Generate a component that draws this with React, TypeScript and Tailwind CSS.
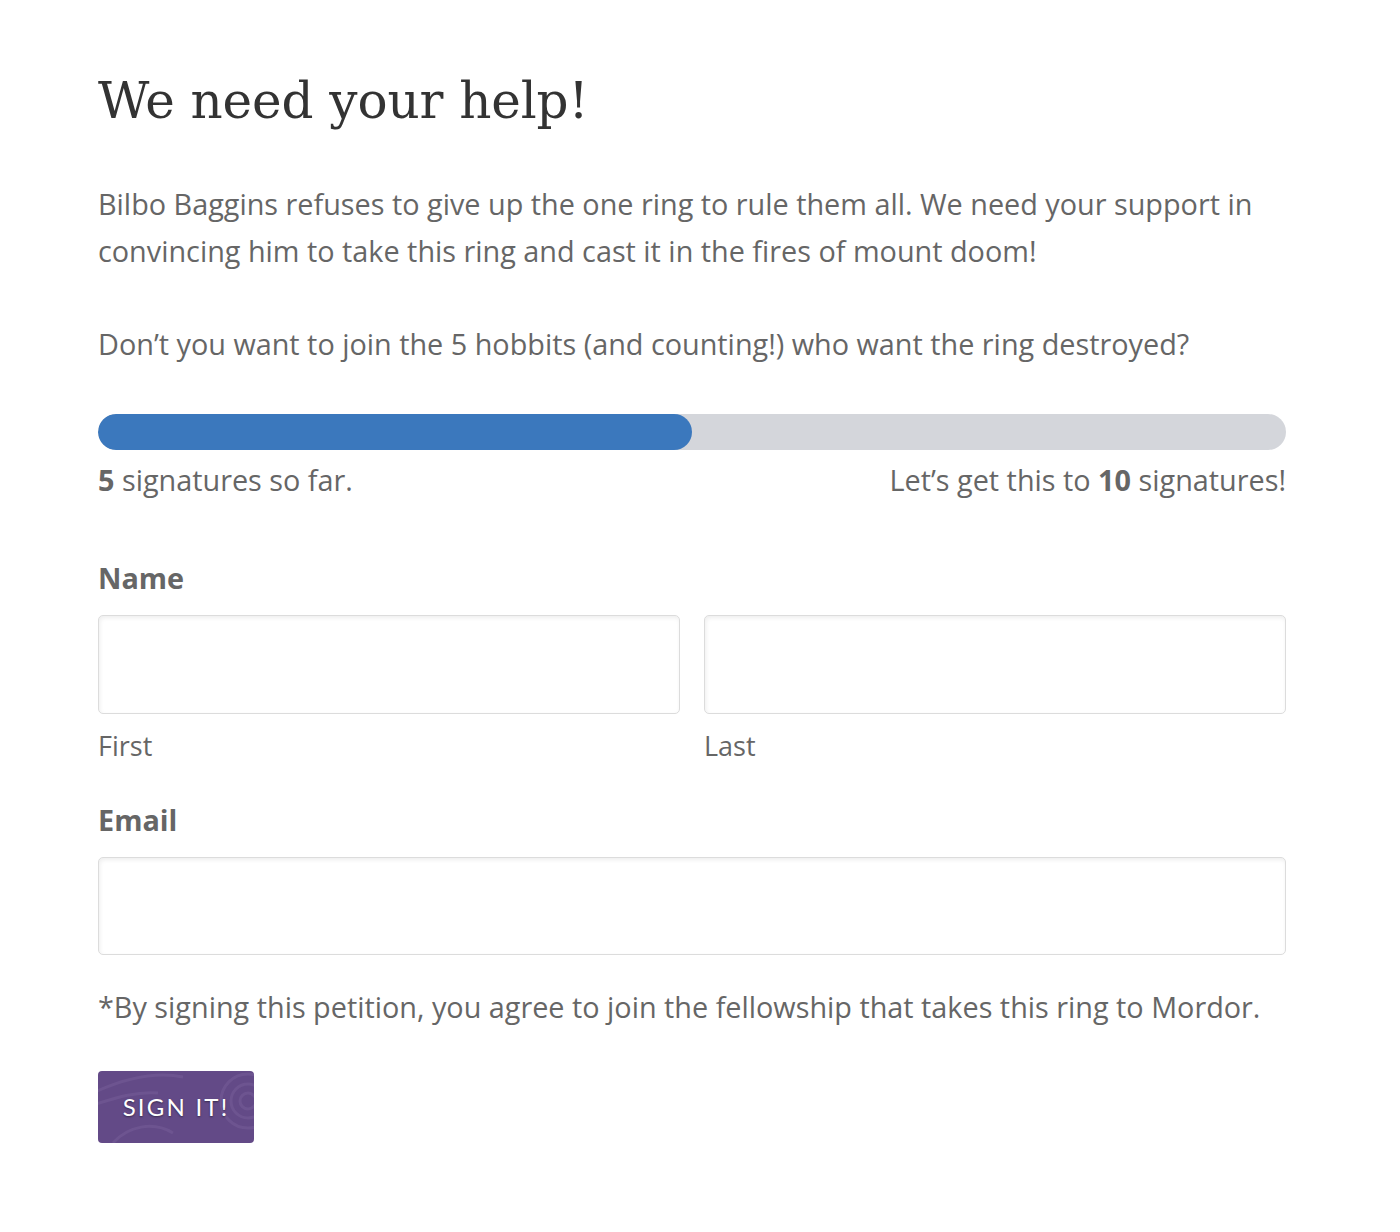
import React from 'react';

const body = "font-['Open_Sans',sans-serif]";
const field =
  'block w-full rounded-[5px] border border-[#dcdcdc] bg-white shadow-[inset_1px_2px_4px_rgba(0,0,0,0.07)] outline-none';

export default function App() {
  return (
    <div className={`min-h-[1232px] bg-white ${body} text-[#666]`}>
      <div className="mx-[98px] w-[1188px] pt-[66px]">
        {/* Heading */}
        <h1 className="font-['DejaVu_Serif',serif] text-[50px] leading-[70px] text-[#333] tracking-[-0.1px]">
          We need your help!
        </h1>

        {/* Intro copy */}
        <p className="mt-[44px] text-[28.8px] leading-[47px]">
          Bilbo Baggins refuses to give up the one ring to rule them all. We need your support in
          convincing him to take this ring and cast it in the fires of mount doom!
        </p>
        <p className="mt-[46px] text-[28.8px] leading-[47px]">
          Don’t you want to join the 5 hobbits (and counting!) who want the ring destroyed?
        </p>

        {/* Progress */}
        <div className="mt-[47px] h-[36px] w-full overflow-hidden rounded-full bg-[#d4d6db]">
          <div className="h-full w-1/2 rounded-full bg-[#3b78bd]" />
        </div>
        <div className="mt-[10px] flex justify-between text-[28.8px] leading-[40px]">
          <span><b className="font-bold">5</b> signatures so far.</span>
          <span>Let’s get this to <b className="font-bold">10</b> signatures!</span>
        </div>

        {/* Form */}
        <form className="mt-[58px]" onSubmit={(e) => e.preventDefault()}>
          <label className="block text-[28.8px] font-bold leading-[40px]">Name</label>
          <div className="mt-[17px] grid grid-cols-2 gap-[24px]">
            <div>
              <input className={`${field} h-[99px]`} />
              <div className="mt-[12px] text-[27px] leading-[40px]">First</div>
            </div>
            <div>
              <input className={`${field} h-[99px]`} />
              <div className="mt-[12px] text-[27px] leading-[40px]">Last</div>
            </div>
          </div>

          <label className="mt-[34px] block text-[28.8px] font-bold leading-[40px]">Email</label>
          <input className={`${field} mt-[17px] h-[98px]`} />

          <p className="mt-[28px] text-[28.8px] leading-[47px]">
            *By signing this petition, you agree to join the fellowship that takes this ring to Mordor.
          </p>

          <button
            type="submit"
            className="relative mt-[41px] h-[72px] w-[156px] overflow-hidden rounded-[4px] bg-[#634a87] font-['Lato',sans-serif] text-[24px] tracking-[2.2px] text-white [text-shadow:0_1px_2px_rgba(0,0,0,0.45)]"
          >
            <svg className="absolute inset-0 h-full w-full" viewBox="0 0 156 72" fill="none" stroke="#8a72ad" strokeOpacity="0.25" strokeWidth="3">
              <circle cx="150" cy="30" r="8" />
              <circle cx="150" cy="30" r="17" />
              <circle cx="150" cy="30" r="27" />
              <path d="M-5 22 C 25 8, 55 0, 85 6" />
              <path d="M-5 34 C 20 26, 40 20, 60 22" />
              <path d="M15 72 C 30 55, 55 50, 75 62" />
            </svg>
            <span className="relative">SIGN IT!</span>
          </button>
        </form>
      </div>
    </div>
  );
}
